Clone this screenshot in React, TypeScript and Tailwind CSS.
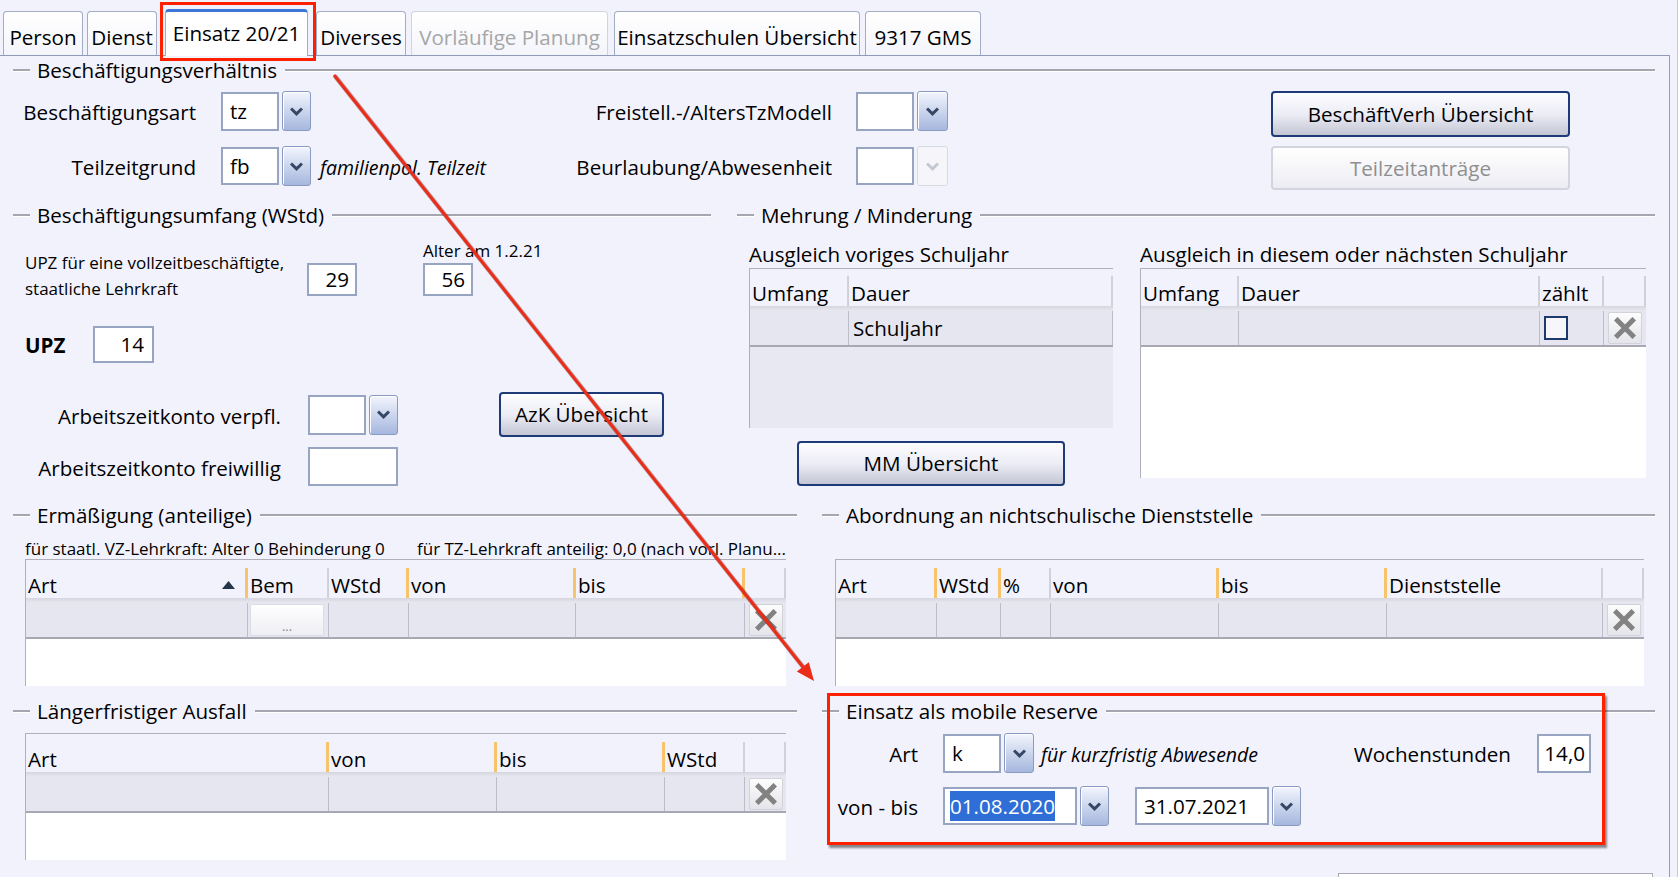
import React from "react";

type Sep = "o" | "g" | "n";
type Col = { label: string; w: string; sep: Sep; sort?: boolean };
type Cell = { w: string; content?: React.ReactNode; last?: boolean };

function Etched({ className = "" }: { className?: string }) {
  return <div className={`h-[3px] border-t-2 border-b border-t-[#a6a6b0] border-b-white ${className}`} />;
}

function GroupTitle({ title }: { title: string }) {
  return (
    <div className="flex h-[28px] items-center">
      <Etched className="w-[17px]" />
      <span className="ml-[7px] mr-[8px] whitespace-nowrap leading-[28px]">{title}</span>
      <Etched className="flex-1" />
    </div>
  );
}

function Chevron({ disabled }: { disabled?: boolean }) {
  return (
    <svg width="13" height="9" viewBox="0 0 13 9">
      <path d="M1 1.5 L6.5 6.8 L12 1.5" fill="none" stroke={disabled ? "#c4c8d2" : "#364767"} strokeWidth="3" />
    </svg>
  );
}

function DropBtn({ className = "", disabled }: { className?: string; disabled?: boolean }) {
  return (
    <div
      className={`flex shrink-0 items-center justify-center rounded-[3px] border ${
        disabled
          ? "border-[#d8dbe3] bg-[#f6f6fa]"
          : "border-[#8a9ac0] bg-linear-to-b from-[#f2f5fc] to-[#a6b7de] shadow-[inset_1px_1px_0_#ffffff]"
      } ${className}`}
    >
      <Chevron disabled={disabled} />
    </div>
  );
}

function Box({ children, className = "" }: { children?: React.ReactNode; className?: string }) {
  return (
    <div className={`flex shrink-0 items-center border-2 border-[#97a5c3] bg-white whitespace-nowrap ${className}`}>
      {children}
    </div>
  );
}

function Combo({
  value,
  className = "",
  disabled,
  inputW = "w-[58px]",
  btnW = "w-[29px]",
  h = "h-[39px]",
}: {
  value?: React.ReactNode;
  className?: string;
  disabled?: boolean;
  inputW?: string;
  btnW?: string;
  h?: string;
}) {
  return (
    <div className={`flex shrink-0 items-center gap-[3px] ${className}`}>
      <Box className={`${inputW} ${h} pl-[7px]`}>{value}</Box>
      <DropBtn disabled={disabled} className={`${btnW} h-[40px]`} />
    </div>
  );
}

function Btn({ children, className = "", disabled }: { children: React.ReactNode; className?: string; disabled?: boolean }) {
  return (
    <div
      className={`flex shrink-0 items-center justify-center rounded-[4px] border-2 whitespace-nowrap ${
        disabled
          ? "border-[#d2d5de] bg-linear-to-b from-white to-[#ececf3] text-[#8f8f8f]"
          : "border-[#1f3b77] bg-linear-to-b from-[#fdfdff] via-[#ecedf5] to-[#c4c6d5]"
      } ${className}`}
    >
      {children}
    </div>
  );
}

function XBtn() {
  return (
    <div className="flex h-[32px] w-[34px] items-center justify-center rounded-[2px] border border-[#d2d2da] bg-linear-to-b from-[#fdfdfd] to-[#e4e4ea]">
      <svg width="22" height="22" viewBox="0 0 22 22">
        <path d="M3.5 3.5 L18.5 18.5 M18.5 3.5 L3.5 18.5" stroke="#828282" strokeWidth="5" strokeLinecap="square" />
      </svg>
    </div>
  );
}

function SortUp() {
  return (
    <svg width="13" height="8" viewBox="0 0 13 8" className="mr-[10px] shrink-0">
      <path d="M6.5 0 L13 8 L0 8 Z" fill="#26364a" />
    </svg>
  );
}

function TableHead({ cols, h = "h-[38px]" }: { cols: Col[]; h?: string }) {
  return (
    <>
      <div className={`flex ${h}`}>
        {cols.map((c, i) => (
          <div key={i} className={`flex shrink-0 items-end ${c.w}`}>
            <div className="flex min-w-0 flex-1 items-center justify-between overflow-hidden whitespace-nowrap pl-[2px] leading-[26px]">
              <span>{c.label}</span>
              {c.sort && <SortUp />}
            </div>
            {c.sep === "o" && <div className="h-[30px] w-[3px] shrink-0 bg-[#f7c36b]" />}
            {c.sep === "g" && <div className="h-[30px] w-[2px] shrink-0 bg-[#d0d0da]" />}
          </div>
        ))}
      </div>
      <div className="h-[5px] bg-linear-to-b from-[#d6d6e1] to-[#e8e8f0]" />
    </>
  );
}

function DataRow({ cells }: { cells: Cell[] }) {
  return (
    <div className="flex h-[36px] border-b-2 border-[#a8a8b4] bg-[#e6e6f0]">
      {cells.map((c, i) => (
        <div
          key={i}
          className={`flex shrink-0 items-center ${c.w} ${c.last ? "justify-center" : "border-r border-[#bdbdc9]"}`}
        >
          {c.content}
        </div>
      ))}
    </div>
  );
}

function Tabs() {
  const tab =
    "flex h-[44px] shrink-0 items-end justify-center rounded-t-[4px] border border-b-0 pb-[4px] leading-[28px] bg-linear-to-b from-white to-[#f4f5fb]";
  return (
    <div className="flex h-[55px] shrink-0 items-end">
      <div className={`${tab} ml-[3px] w-[80px] border-[#a2acc2]`}>Person</div>
      <div className={`${tab} ml-[4px] w-[70px] border-[#a2acc2]`}>Dienst</div>
      <div className="relative z-10 -mb-[1px] ml-[8px] flex h-[47px] w-[143px] shrink-0 items-end justify-center rounded-t-[4px] border border-b-0 border-[#a2acc2] border-t-[3px] border-t-[#3c76d8] bg-white pb-[9px] leading-[28px]">
        Einsatz 20/21
      </div>
      <div className={`${tab} ml-[8px] w-[90px] border-[#a2acc2]`}>Diverses</div>
      <div className={`${tab} ml-[5px] w-[197px] border-[#cfd4e0] text-[#a6a6a6]`}>Vorläufige Planung</div>
      <div className={`${tab} ml-[6px] w-[246px] border-[#a2acc2]`}>Einsatzschulen Übersicht</div>
      <div className={`${tab} ml-[5px] w-[116px] border-[#a2acc2]`}>9317 GMS</div>
    </div>
  );
}

function Annotations() {
  return (
    <>
      <div className="pointer-events-none absolute left-[160px] top-[2px] h-[59px] w-[156px] border-[3px] border-[#ff2000]" />
      <div className="pointer-events-none absolute left-[827px] top-[693px] h-[152px] w-[778px] border-[3px] border-[#ff2000] shadow-[2px_3px_2px_rgba(0,0,0,0.45)]" />
      <svg className="pointer-events-none absolute left-0 top-0" width="1678" height="877" viewBox="0 0 1678 877">
        <line x1="335" y1="76" x2="804" y2="668" stroke="rgba(90,20,10,0.35)" strokeWidth="4.5" />
        <line x1="334" y1="75" x2="803" y2="667" stroke="#ea2c18" strokeWidth="3" />
        <polygon points="814,681 796.8,671.6 808.8,662.2" fill="#ea2c18" />
      </svg>
    </>
  );
}

export default function App() {
  const ermCols: Col[] = [
    { label: "Art", w: "w-[222px]", sep: "o", sort: true },
    { label: "Bem", w: "w-[81px]", sep: "g" },
    { label: "WStd", w: "w-[80px]", sep: "o" },
    { label: "von", w: "w-[167px]", sep: "o" },
    { label: "bis", w: "w-[169px]", sep: "o" },
    { label: "", w: "w-[41px]", sep: "g" },
  ];
  const ermCells: Cell[] = [
    { w: "w-[222px]" },
    {
      w: "w-[81px]",
      content: (
        <div className="ml-[2px] flex h-[32px] w-[74px] items-end justify-center rounded-[2px] border border-[#dcdce4] bg-linear-to-b from-white to-[#eeeef4] pb-[2px] text-[13px] leading-[14px] text-[#8a8a8a]">
          ...
        </div>
      ),
    },
    { w: "w-[80px]" },
    { w: "w-[167px]" },
    { w: "w-[169px]" },
    { w: "w-[41px]", last: true, content: <XBtn /> },
  ];
  const lfCols: Col[] = [
    { label: "Art", w: "w-[303px]", sep: "o" },
    { label: "von", w: "w-[168px]", sep: "o" },
    { label: "bis", w: "w-[168px]", sep: "o" },
    { label: "WStd", w: "w-[80px]", sep: "g" },
    { label: "", w: "w-[41px]", sep: "g" },
  ];
  const lfCells: Cell[] = [
    { w: "w-[303px]" },
    { w: "w-[168px]" },
    { w: "w-[168px]" },
    { w: "w-[80px]" },
    { w: "w-[41px]", last: true, content: <XBtn /> },
  ];
  const abCols: Col[] = [
    { label: "Art", w: "w-[101px]", sep: "o" },
    { label: "WStd", w: "w-[64px]", sep: "o" },
    { label: "%", w: "w-[50px]", sep: "g" },
    { label: "von", w: "w-[168px]", sep: "o" },
    { label: "bis", w: "w-[168px]", sep: "o" },
    { label: "Dienststelle", w: "w-[216px]", sep: "g" },
    { label: "", w: "w-[41px]", sep: "g" },
  ];
  const abCells: Cell[] = [
    { w: "w-[101px]" },
    { w: "w-[64px]" },
    { w: "w-[50px]" },
    { w: "w-[168px]" },
    { w: "w-[168px]" },
    { w: "w-[216px]" },
    { w: "w-[41px]", last: true, content: <XBtn /> },
  ];

  return (
    <div className="relative flex h-[877px] w-[1678px] flex-col overflow-hidden border-r border-[#c6cad8] bg-[#f2f2fc] font-['Open_Sans',sans-serif] text-[20.6px] text-black">
      <Tabs />
      <div className="w-[1670px] flex-1 border-r border-t border-[#8f9bb7] pl-[13px] pr-[14px]">
        {/* Beschäftigungsverhältnis */}
        <GroupTitle title="Beschäftigungsverhältnis" />
        <div className="flex">
          <div className="flex flex-col">
            <div className="mt-[7px] flex h-[40px] items-center">
              <div className="w-[183px] shrink-0 pt-[3px] text-right">Beschäftigungsart</div>
              <Combo value="tz" className="ml-[25px]" />
              <div className="w-[521px] shrink-0 pt-[3px] text-right">Freistell.-/AltersTzModell</div>
              <Combo className="ml-[24px]" btnW="w-[31px]" />
            </div>
            <div className="mt-[16px] flex h-[38px] items-center">
              <div className="w-[183px] shrink-0 pt-[3px] text-right">Teilzeitgrund</div>
              <Combo value="fb" className="ml-[25px]" h="h-[38px]" />
              <div className="flex w-[521px] shrink-0 items-center pt-[3px]">
                <span className="ml-[9px] text-[19.5px] italic">familienpol. Teilzeit</span>
                <span className="ml-auto">Beurlaubung/Abwesenheit</span>
              </div>
              <Combo className="ml-[24px]" btnW="w-[31px]" h="h-[38px]" disabled />
            </div>
          </div>
          <div className="ml-auto mr-[85px] flex flex-col">
            <Btn className="mt-[7px] h-[46px] w-[299px]">BeschäftVerh Übersicht</Btn>
            <Btn disabled className="mt-[9px] h-[44px] w-[299px]">
              Teilzeitanträge
            </Btn>
          </div>
        </div>

        {/* Umfang + Mehrung */}
        <div className="mt-[11px] flex">
          <div className="w-[698px] shrink-0">
            <GroupTitle title="Beschäftigungsumfang (WStd)" />
            <div className="mt-[11px] flex items-start">
              <div className="w-[294px] shrink-0 pl-[12px] pt-[10px] text-[17px] leading-[26px]">
                UPZ für eine vollzeitbeschäftigte,
                <br />
                staatliche Lehrkraft
              </div>
              <Box className="mt-[23px] h-[33px] w-[50px] justify-end pr-[6px]">29</Box>
              <div className="ml-[66px] flex w-[50px] flex-col">
                <div className="h-[22px] whitespace-nowrap text-[17px] leading-[22px]">Alter am 1.2.21</div>
                <Box className="mt-[1px] h-[33px] w-[50px] justify-end pr-[6px]">56</Box>
              </div>
            </div>
            <div className="mt-[24px] flex items-center">
              <div className="w-[80px] shrink-0 pl-[12px] pt-[2px] font-bold">UPZ</div>
              <Box className="h-[37px] w-[61px] justify-end pr-[8px]">14</Box>
            </div>
            <div className="mt-[29px] flex h-[45px] items-center">
              <div className="w-[268px] shrink-0 pt-[3px] text-right">Arbeitszeitkonto verpfl.</div>
              <Combo className="ml-[27px]" h="h-[40px]" />
              <Btn className="ml-[101px] h-[45px] w-[165px]">AzK Übersicht</Btn>
            </div>
            <div className="mt-[10px] flex items-center">
              <div className="w-[268px] shrink-0 pt-[3px] text-right">Arbeitszeitkonto freiwillig</div>
              <Box className="ml-[27px] h-[39px] w-[90px]" />
            </div>
          </div>

          <div className="ml-[26px] w-[918px] shrink-0">
            <GroupTitle title="Mehrung / Minderung" />
            <div className="mt-[11px] flex">
              <div className="w-[376px] shrink-0 pl-[12px]">
                <div className="h-[28px] whitespace-nowrap leading-[28px]">Ausgleich voriges Schuljahr</div>
                <div className="w-[364px] border-l border-t border-[#b0b0bd]">
                  <TableHead
                    h="h-[37px]"
                    cols={[
                      { label: "Umfang", w: "w-[99px]", sep: "g" },
                      { label: "Dauer", w: "w-[264px]", sep: "g" },
                    ]}
                  />
                  <DataRow
                    cells={[
                      { w: "w-[99px]" },
                      { w: "w-[264px]", content: <span className="pl-[4px]">Schuljahr</span> },
                    ]}
                  />
                  <div className="h-[81px] bg-[#e8e8f2]" />
                </div>
                <div className="flex justify-center">
                  <Btn className="mt-[13px] h-[45px] w-[268px]">MM Übersicht</Btn>
                </div>
              </div>
              <div className="ml-[27px] w-[506px] shrink-0">
                <div className="h-[28px] whitespace-nowrap leading-[28px]">Ausgleich in diesem oder nächsten Schuljahr</div>
                <div className="w-[506px] border-l border-t border-[#b0b0bd]">
                  <TableHead
                    h="h-[37px]"
                    cols={[
                      { label: "Umfang", w: "w-[98px]", sep: "g" },
                      { label: "Dauer", w: "w-[301px]", sep: "g" },
                      { label: "zählt", w: "w-[64px]", sep: "g" },
                      { label: "", w: "w-[42px]", sep: "g" },
                    ]}
                  />
                  <DataRow
                    cells={[
                      { w: "w-[98px]" },
                      { w: "w-[301px]" },
                      {
                        w: "w-[64px]",
                        content: <div className="ml-[4px] h-[24px] w-[24px] border-2 border-[#1e3a6c] bg-[#f6f6fb]" />,
                      },
                      { w: "w-[42px]", last: true, content: <XBtn /> },
                    ]}
                  />
                  <div className="h-[131px] bg-white" />
                </div>
              </div>
            </div>
          </div>
        </div>

        {/* Ermäßigung / Abordnung / Ausfall / Reserve */}
        <div className="mt-[15px] flex">
          <div className="w-[784px] shrink-0">
            <GroupTitle title="Ermäßigung (anteilige)" />
            <div className="mt-[10px] flex h-[20px] items-center whitespace-nowrap pl-[12px] text-[17px] leading-[20px]">
              <span className="w-[392px] shrink-0">für staatl. VZ-Lehrkraft: Alter 0 Behinderung 0</span>
              <span>für TZ-Lehrkraft anteilig: 0,0 (nach vorl. Planu...</span>
            </div>
            <div className="ml-[12px] w-[761px] border-l border-t border-[#b0b0bd]">
              <TableHead cols={ermCols} />
              <DataRow cells={ermCells} />
              <div className="h-[47px] bg-white" />
            </div>
            <div className="mt-[11px]">
              <GroupTitle title="Längerfristiger Ausfall" />
            </div>
            <div className="ml-[12px] mt-[8px] w-[761px] border-l border-t border-[#b0b0bd]">
              <TableHead cols={lfCols} />
              <DataRow cells={lfCells} />
              <div className="h-[47px] bg-white" />
            </div>
          </div>

          <div className="ml-[25px] w-[833px] shrink-0">
            <GroupTitle title="Abordnung an nichtschulische Dienststelle" />
            <div className="ml-[13px] mt-[30px] w-[809px] border-l border-t border-[#b0b0bd]">
              <TableHead cols={abCols} />
              <DataRow cells={abCells} />
              <div className="h-[47px] bg-white" />
            </div>
            <div className="mt-[11px]">
              <GroupTitle title="Einsatz als mobile Reserve" />
            </div>
            <div className="mt-[8px] flex h-[40px] items-center">
              <div className="w-[96px] shrink-0 pt-[3px] text-right">Art</div>
              <Combo value="k" className="ml-[25px]" btnW="w-[30px]" />
              <span className="ml-[7px] whitespace-nowrap pt-[3px] text-[19.5px] italic">für kurzfristig Abwesende</span>
              <span className="ml-auto pt-[3px]">Wochenstunden</span>
              <Box className="ml-[26px] mr-[64px] h-[39px] w-[54px] justify-end pr-[4px]">14,0</Box>
            </div>
            <div className="mt-[13px] flex h-[40px] items-center">
              <div className="w-[96px] shrink-0 whitespace-nowrap pt-[3px] text-right">von - bis</div>
              <Combo
                className="ml-[25px]"
                inputW="w-[134px]"
                h="h-[38px]"
                value={<span className="-ml-[2px] bg-[#2f6ed6] leading-[30px] text-white">01.08.2020</span>}
              />
              <Combo className="ml-[26px]" inputW="w-[134px]" h="h-[38px]" value="31.07.2021" />
            </div>
          </div>
        </div>

        <div className="mt-[13px] flex justify-end">
          <div className="mr-[2px] h-[20px] w-[315px] border border-b-0 border-[#a9a9b6] bg-white" />
        </div>
      </div>
      <Annotations />
    </div>
  );
}
